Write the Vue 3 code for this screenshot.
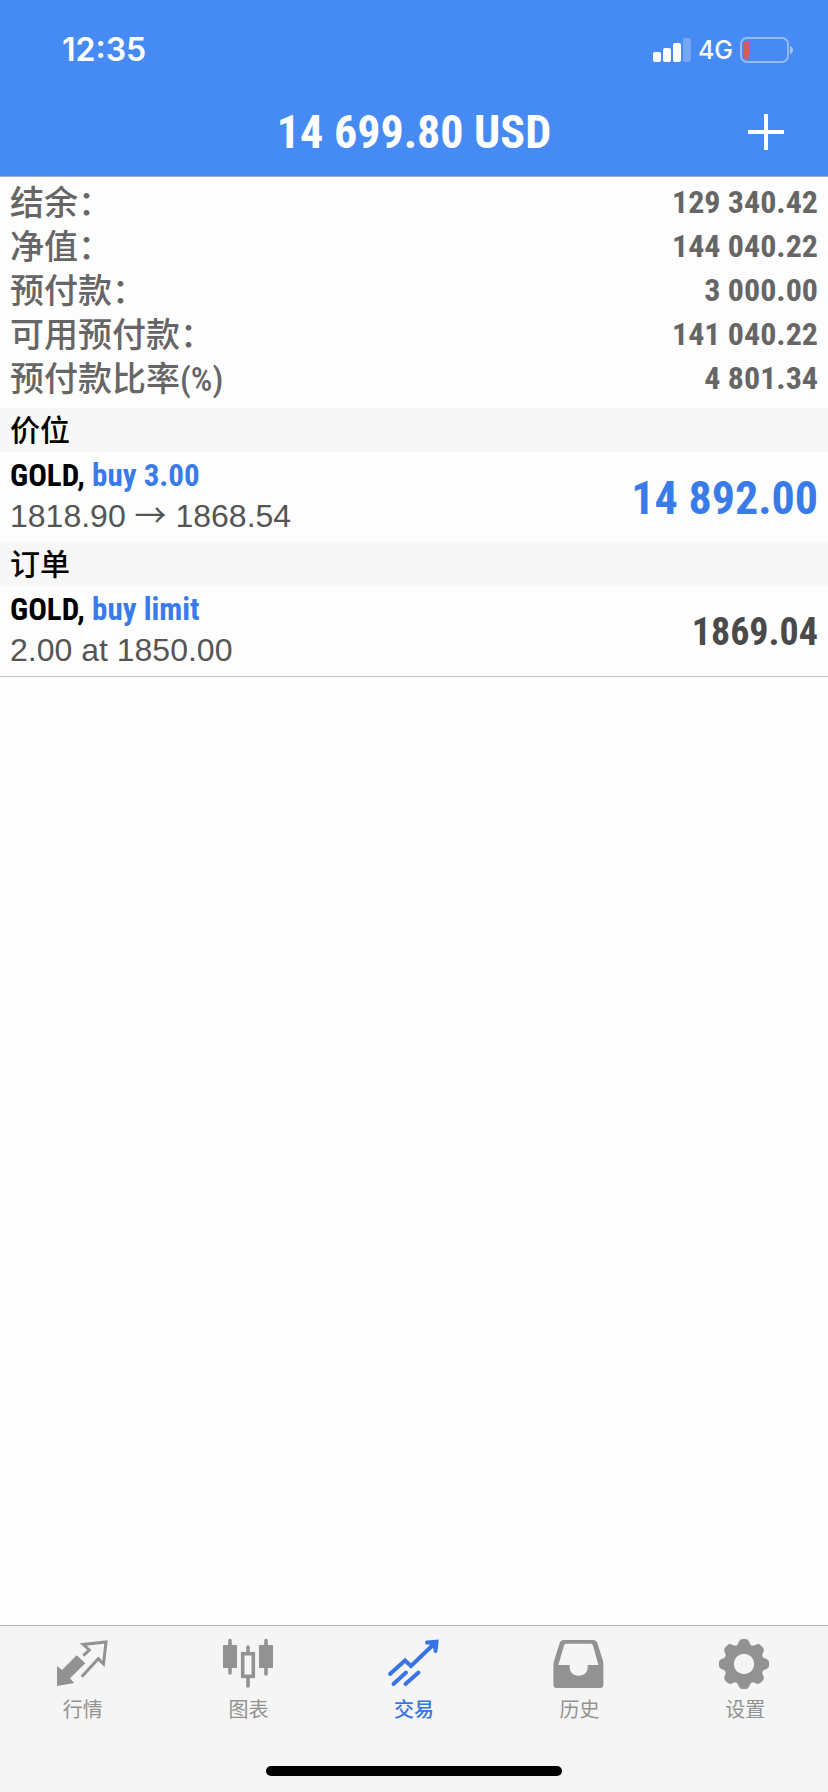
<script setup>
const account = [
  { label: '结余：', value: '129 340.42' },
  { label: '净值：', value: '144 040.22' },
  { label: '预付款：', value: '3 000.00' },
  { label: '可用预付款：', value: '141 040.22' },
  { label: '预付款比率(%)', value: '4 801.34' },
]

const sections = [
  {
    title: '价位',
    items: [{ symbol: 'GOLD,', action: 'buy 3.00', from: '1818.90', link: '→', to: '1868.54', value: '14 892.00', profit: true }],
  },
  {
    title: '订单',
    items: [{ symbol: 'GOLD,', action: 'buy limit', from: '2.00', link: 'at', to: '1850.00', value: '1869.04', profit: false }],
  },
]

const tabs = [
  { id: 'quotes', label: '行情' },
  { id: 'chart', label: '图表' },
  { id: 'trade', label: '交易' },
  { id: 'history', label: '历史' },
  { id: 'settings', label: '设置' },
]
const activeTab = 'trade'
const teeth = [0, 45, 90, 135, 180, 225, 270, 315]
</script>

<template>
  <div class="page">
    <header class="header">
      <div class="status">
        <time class="clock">12:35</time>
        <div class="indicators">
          <svg class="signal" viewBox="0 0 38 24" aria-hidden="true">
            <rect x="0" y="14" width="8" height="10" rx="2" />
            <rect x="10" y="10" width="8" height="14" rx="2" />
            <rect x="20" y="5" width="8" height="19" rx="2" />
            <rect x="30" y="0" width="8" height="24" rx="2" opacity="0.25" />
          </svg>
          <span class="network">4G</span>
          <svg class="battery" viewBox="0 0 54 26" aria-hidden="true">
            <rect x="1" y="1" width="47" height="24" rx="6" fill="none" stroke="#ffffff" stroke-opacity="0.42" stroke-width="2" />
            <path d="M7 4H9V22H7Q3 22 3 18V8Q3 4 7 4Z" fill="#cf5b63" />
            <path d="M50 9Q53 10 53 13Q53 16 50 17Z" fill="#ffffff" opacity="0.5" />
          </svg>
        </div>
      </div>
      <div class="titlebar">
        <h1 class="title">14 699.80 USD</h1>
        <button class="add" type="button" aria-label="+">
          <svg viewBox="0 0 36 36" aria-hidden="true">
            <path d="M18 0V36M0 18H36" stroke="#ffffff" stroke-width="4" />
          </svg>
        </button>
      </div>
    </header>

    <main class="content">
      <dl class="account">
        <div v-for="row in account" :key="row.label" class="account-row">
          <dt>{{ row.label }}</dt>
          <dd>{{ row.value }}</dd>
        </div>
      </dl>

      <section v-for="section in sections" :key="section.title" class="section">
        <h2 class="section-title">{{ section.title }}</h2>
        <article v-for="item in section.items" :key="item.to" class="item">
          <div>
            <h3 class="item-name">{{ item.symbol }} <span>{{ item.action }}</span></h3>
            <p class="item-detail">
              {{ item.from }} <span :class="{ arrow: item.link === '→' }">{{ item.link }}</span> {{ item.to }}
            </p>
          </div>
          <strong class="item-value" :class="{ profit: item.profit }">{{ item.value }}</strong>
        </article>
      </section>
    </main>

    <footer class="footer">
      <nav class="tabs">
        <button
          v-for="tab in tabs"
          :key="tab.id"
          type="button"
          class="tab"
          :class="{ active: tab.id === activeTab }"
          :aria-current="tab.id === activeTab ? 'page' : undefined"
        >
          <svg v-if="tab.id === 'quotes'" class="icon" viewBox="0 0 50 50" aria-hidden="true">
            <path d="M-1 28L4 32L18.700 17.300L27.300 25.300L12 40.300L16.300 45L-1 48Z" fill="currentColor" />
            <path d="M25.300 17.700L31.300 12L25.300 6.500L48 4L45.500 26L40.300 20.700L23.700 38.700" fill="none" stroke="currentColor" stroke-width="3" />
          </svg>
          <svg v-else-if="tab.id === 'chart'" class="icon" viewBox="0 0 50 50" aria-hidden="true">
            <g fill="currentColor">
              <rect x="0" y="7" width="14" height="23" rx="1" />
              <rect x="36" y="7" width="14" height="23" rx="1" />
            </g>
            <g fill="none" stroke="currentColor" stroke-width="3.600" stroke-linecap="round">
              <path d="M7 2.500V35M43 2.500V36M25 9V15M25 40V48" />
              <rect x="19.700" y="15.700" width="10.600" height="22.600" />
            </g>
          </svg>
          <svg v-else-if="tab.id === 'trade'" class="icon" viewBox="0 0 50 50" aria-hidden="true">
            <g fill="none" stroke="currentColor" stroke-width="4" stroke-linecap="round">
              <path d="M1 36L16 22.500L22 28L46 5M4.500 46L17 34.500M16.500 46L29.500 34.500" />
              <path d="M38 4.500L47.500 3.700L46.500 13" fill="currentColor" />
            </g>
          </svg>
          <svg v-else-if="tab.id === 'history'" class="icon" viewBox="0 0 50 50" aria-hidden="true">
            <path
              fill="currentColor"
              fill-rule="evenodd"
              d="M9 2H38Q41.500 2 42.500 5.500L48 23Q48.400 24.500 48.400 26V46.500Q48.400 50 45 50H2Q-1.600 50-1.600 46.500V26Q-1.600 24.500-1 23L4.500 5.500Q5.500 2 9 2ZM11 5.700Q9.500 5.700 9 7.500L3.400 27H14.700V29C14.700 34.500 18.500 37.700 23.700 37.700S32.700 34.500 32.700 29V27H43.400L38 7.500Q37.500 5.700 36 5.700Z"
            />
          </svg>
          <svg v-else class="icon" viewBox="0 0 50 50" aria-hidden="true">
            <g transform="translate(24 26)">
              <circle r="15" fill="none" stroke="currentColor" stroke-width="9.600" />
              <path
                v-for="angle in teeth"
                :key="angle"
                :transform="`rotate(${angle})`"
                d="M-9-17Q-6-19-5-22.500Q-4-25-2-25H2Q4-25 5-22.500Q6-19 9-17Z"
                fill="currentColor"
              />
            </g>
          </svg>
          <span>{{ tab.label }}</span>
        </button>
      </nav>
      <div class="home-indicator"></div>
    </footer>
  </div>
</template>

<style>
body {
  margin: 0;
  background: #fdfdfd;
}
</style>

<style scoped>
.page {
  --narrow: "Roboto Condensed", Roboto, "Noto Sans CJK SC", sans-serif;
  --cjk: "Liberation Sans", "Noto Sans CJK SC", sans-serif;
  display: flex;
  flex-direction: column;
  min-height: 100vh;
  background: #fdfdfd;
  font-family: var(--cjk);
}

h1,
h2,
h3,
p,
dl,
dd {
  margin: 0;
}

button {
  padding: 0;
  border: 0;
  background: none;
  font-family: inherit;
  cursor: pointer;
}

.header {
  background: #468bf4;
  border-bottom: 1px solid #9bafd6;
  color: #ffffff;
}

.status {
  display: flex;
  align-items: center;
  justify-content: space-between;
  height: 88px;
  padding: 12px 34px 0 62px;
  box-sizing: border-box;
  font-family: Inter, sans-serif;
}

.clock {
  font-size: 32px;
  line-height: 40px;
  font-weight: 600;
}

.indicators {
  display: flex;
  align-items: center;
  gap: 7px;
}

.signal {
  width: 38px;
  height: 24px;
  fill: #ffffff;
}

.network {
  font-size: 25px;
  line-height: 32px;
  font-weight: 500;
}

.battery {
  width: 54px;
  height: 26px;
}

.titlebar {
  display: grid;
  grid-template-columns: 1fr auto 1fr;
  align-items: center;
  height: 88px;
  padding: 0 44px;
}

.title {
  grid-column: 2;
  font: 700 46px/56px var(--narrow);
}

.add {
  justify-self: end;
  width: 36px;
  height: 36px;
  color: #ffffff;
}

.add svg {
  display: block;
}

.content {
  flex: 1;
}

.account {
  padding: 3px 10px 8px;
  color: #666666;
}

.account-row {
  display: flex;
  align-items: center;
  justify-content: space-between;
  height: 44px;
}

.account dt {
  padding-top: 2px;
  font: 500 34px/42px var(--narrow);
}

.account dd {
  font: 700 32px/44px var(--narrow);
}

.section-title {
  padding: 2px 10px 0;
  background: #f7f7f7;
  color: #000000;
  font: 500 30px/42px var(--narrow);
}

.item {
  display: flex;
  align-items: center;
  justify-content: space-between;
  padding: 4px 10px 6px;
}

.section:last-child {
  border-bottom: 1px solid #c3c3c5;
}

.item-name {
  color: #000000;
  font: 700 31px/40px var(--narrow);
}

.item-name span {
  color: #3a7bea;
}

.item-detail {
  color: #555555;
  font: 400 32px/40px var(--cjk);
}

.arrow {
  font-family: "Noto Sans CJK SC", sans-serif;
  line-height: 1;
}

.item-value {
  padding-top: 4px;
  color: #4a4a4a;
  font: 700 38px/48px var(--narrow);
}

.item-value.profit {
  color: #3a7bea;
  font-size: 46px;
}

.footer {
  background: #f5f5f5;
  border-top: 1px solid #b2b2b2;
}

.tabs {
  display: grid;
  grid-template-columns: repeat(5, 1fr);
}

.tab {
  display: flex;
  flex-direction: column;
  align-items: center;
  gap: 8px;
  padding-top: 12px;
  color: #929292;
  font-size: 20px;
  line-height: 28px;
}

.tab.active {
  color: #3a74e4;
  font-weight: 500;
}

.icon {
  width: 50px;
  height: 50px;
  overflow: visible;
}

.home-indicator {
  width: 296px;
  height: 10px;
  margin: 42px auto 16px;
  border-radius: 5px;
  background: #000000;
}
</style>
